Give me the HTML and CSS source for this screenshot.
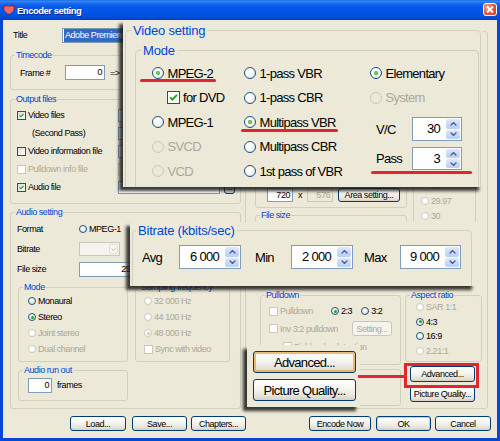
FILE: index.html
```html
<!DOCTYPE html>
<html lang="en">
<head>
  <meta charset="UTF-8">
  <title>Encoder setting</title>
  <link rel="stylesheet" href="styles.css">
</head>
<body>
  <div class="window">
    <div class="titlebar">
      <svg class="app-icon" viewBox="0 0 12 12">
        <path d="M6 11L1.2 6.2C-0.3 4.6 0.2 1.6 2.6 1.2C4 1 5.3 1.9 6 3C6.7 1.9 8 1 9.4 1.2C11.8 1.6 12.3 4.6 10.8 6.2Z" fill="#D9242B" stroke="#8A0F12" stroke-width="0.6"/>
        <path d="M3 2v6M5 2v8M7 2v8M9 2v6M1 4h10M1 6h10M3 8h6" stroke="#fff" stroke-width="0.5" opacity="0.75"/>
      </svg>
      <span class="title-text">Encoder setting</span>
      <span class="close-btn">
        <svg width="12" height="11" viewBox="0 0 12 11"><path d="M3 2.5l6 6M9 2.5l-6 6" stroke="#fff" stroke-width="1.8"/></svg>
      </span>
    </div>

    <div class="client">
      <div class="dialog-body">
        <!-- left column -->
        <div class="col-left">
          <div class="title-row">
            <span class="title-label">Title</span>
            <div class="textbox title-box"><span class="selected">Adobe Premiere Pro</span></div>
          </div>

          <div class="group timecode">
            <span class="group-title">Timecode</span>
            <div class="frame-row">
              <span class="frame-label">Frame #</span>
              <div class="textbox frame-box">0</div>
              <span class="arrow">=&gt;</span>
            </div>
          </div>

          <div class="group output">
            <span class="group-title">Output files</span>
            <div class="out-row">
              <span class="chk-line"><span class="chk"><svg viewBox="0 0 9 9"><path d="M1.8 4.3l1.8 1.8L7.2 2.4" fill="none" stroke="#21A121" stroke-width="1.5"/></svg></span>Video files</span>
              <div class="textbox path"></div><span class="btn dots">...</span>
            </div>
            <div class="out-row">
              <span class="chk-line indent">(Second Pass)</span>
              <div class="textbox path"></div><span class="btn dots">...</span>
            </div>
            <div class="out-row">
              <span class="chk-line"><span class="chk"></span>Video information file</span>
              <div class="textbox path"></div><span class="btn dots">...</span>
            </div>
            <div class="out-row">
              <span class="chk-line dis"><span class="chk off"></span>Pulldown info file</span>
              <div class="textbox path off"></div><span class="btn dots off">...</span>
            </div>
            <div class="out-row">
              <span class="chk-line"><span class="chk"><svg viewBox="0 0 9 9"><path d="M1.8 4.3l1.8 1.8L7.2 2.4" fill="none" stroke="#21A121" stroke-width="1.5"/></svg></span>Audio file</span>
              <div class="textbox path"></div><span class="btn dots">...</span>
            </div>
          </div>

          <div class="group audio">
            <span class="group-title">Audio setting</span>
            <div class="audio-row">
              <span>Format</span>
              <span class="rad-line"><span class="rad"></span>MPEG-1</span>
            </div>
            <div class="audio-row">
              <span>Bitrate</span>
              <span class="select"><span class="select-btn"><svg width="5" height="3" viewBox="0 0 5 3"><path d="M0.5 0.5l2 2 2-2" fill="none" stroke="#B8B5A8" stroke-width="1"/></svg></span></span>
            </div>
            <div class="audio-row">
              <span>File size</span>
              <div class="textbox size-box">25 000</div>
            </div>

            <div class="audio-sub">
              <div class="group mode-grp">
                <span class="group-title">Mode</span>
                <div class="rad-line"><span class="rad"></span>Monaural</div>
                <div class="rad-line"><span class="rad on"></span>Stereo</div>
                <div class="rad-line dis"><span class="rad off"></span>Joint stereo</div>
                <div class="rad-line dis"><span class="rad off"></span>Dual channel</div>
              </div>
              <div class="group freq-grp">
                <span class="group-title">Sampling frequency</span>
                <div class="rad-line dis"><span class="rad off"></span>32 000 Hz</div>
                <div class="rad-line dis"><span class="rad off"></span>44 100 Hz</div>
                <div class="rad-line dis"><span class="rad off on"></span>48 000 Hz</div>
                <div class="rad-line dis"><span class="chk off"></span>Sync with video</div>
              </div>
            </div>

            <div class="group runout">
              <span class="group-title">Audio run out</span>
              <div class="textbox runout-box">0</div>
              <span class="frames">frames</span>
            </div>
          </div>
        </div>

        <!-- right column (mostly covered by the callouts) -->
        <div class="group video-bg">
          <span class="group-title">Video setting</span>
          <div class="upper">
            <div class="main-col">
              <div class="group pic-grp">
                <span class="group-title">Picture size</span>
                <div class="pic-row">
                  <div class="textbox small-box">720</div>
                  <span class="times">x</span>
                  <div class="textbox small-box off">576</div>
                  <span class="btn area-btn">Area setting...</span>
                </div>
              </div>
              <div class="group filesize-grp">
                <span class="group-title">File size</span>
              </div>
            </div>
            <div class="group fps-grp">
              <span class="group-title">Frame rate</span>
              <div class="rad-line dis"><span class="rad off"></span>25</div>
              <div class="rad-line dis"><span class="rad off"></span>29.97</div>
              <div class="rad-line dis"><span class="rad off"></span>30</div>
            </div>
          </div>

          <div class="lower">
            <div class="lower-left">
              <div class="group pulldown-grp">
                <span class="group-title">Pulldown</span>
                <div class="pd-row one">
                  <span class="chk-line dis"><span class="chk off"></span>Pulldown</span>
                  <span class="rad-line"><span class="rad on"></span>2:3</span>
                  <span class="rad-line pd-gap"><span class="rad"></span>3:2</span>
                </div>
                <div class="pd-row two">
                  <span class="chk-line dis"><span class="chk off"></span>Inv 3:2 pulldown</span>
                  <span class="btn setting-btn off">Setting...</span>
                </div>
                <div class="pd-row three">
                  <span class="chk-line dis"><span class="chk off"></span>Field order detection</span>
                </div>
              </div>
              <div class="group misc-grp"></div>
            </div>
            <div class="lower-right">
              <div class="group aspect-grp">
                <span class="group-title">Aspect ratio</span>
                <div class="rad-line asp dis"><span class="rad off"></span>SAR 1:1</div>
                <div class="rad-line asp"><span class="rad on"></span>4:3</div>
                <div class="rad-line asp"><span class="rad"></span>16:9</div>
                <div class="rad-line asp dis"><span class="rad off"></span>2.21:1</div>
              </div>
              <span class="btn side-btn adv">Advanced...</span>
              <span class="btn side-btn pq">Picture Quality...</span>
            </div>
          </div>
        </div>
      </div>

      <div class="button-row">
        <span class="btn b-load">Load...</span>
        <span class="btn b-save">Save...</span>
        <span class="btn b-chap">Chapters...</span>
        <span class="btn b-enc">Encode Now</span>
        <span class="btn b-ok default">OK</span>
        <span class="btn b-cancel">Cancel</span>
      </div>
    </div>

    <!-- magnified callouts -->
    <div class="callout video-callout">
      <div class="big-group video-grp">
        <span class="big-title">Video setting</span>
        <div class="big-group mode-big">
          <span class="big-title">Mode</span>
          <div class="mode-cols">
            <div class="mcol c1">
              <div class="big-row"><span class="brad on"></span>MPEG-2</div>
              <div class="big-row dvd"><span class="bchk"><svg viewBox="0 0 11 11"><path d="M2.2 5.4l2.2 2.3L9 2.8" fill="none" stroke="#21A121" stroke-width="1.8"/></svg></span>for DVD</div>
              <div class="big-row"><span class="brad"></span>MPEG-1</div>
              <div class="big-row dis"><span class="brad off"></span>SVCD</div>
              <div class="big-row dis"><span class="brad off"></span>VCD</div>
            </div>
            <div class="mcol c2">
              <div class="big-row"><span class="brad"></span>1-pass VBR</div>
              <div class="big-row"><span class="brad"></span>1-pass CBR</div>
              <div class="big-row"><span class="brad on"></span>Multipass VBR</div>
              <div class="big-row"><span class="brad"></span>Multipass CBR</div>
              <div class="big-row"><span class="brad"></span>1st pass of VBR</div>
            </div>
            <div class="mcol c3">
              <div class="big-row"><span class="brad on"></span>Elementary</div>
              <div class="big-row dis"><span class="brad off"></span>System</div>
              <div class="spin-row vc">
                <span class="spin-label">V/C</span>
                <div class="spin"><span class="spin-val">30</span><span class="spin-btns"><span><svg width="7" height="4" viewBox="0 0 7 4"><path d="M0.6 3.4l2.9-2.8 2.9 2.8" fill="none" stroke="#4D6185" stroke-width="1.4"/></svg></span><span><svg width="7" height="4" viewBox="0 0 7 4"><path d="M0.6 0.6l2.9 2.8 2.9-2.8" fill="none" stroke="#4D6185" stroke-width="1.4"/></svg></span></span></div>
              </div>
              <div class="spin-row pass">
                <span class="spin-label">Pass</span>
                <div class="spin short"><span class="spin-val">3</span><span class="spin-btns"><span><svg width="7" height="4" viewBox="0 0 7 4"><path d="M0.6 3.4l2.9-2.8 2.9 2.8" fill="none" stroke="#4D6185" stroke-width="1.4"/></svg></span><span><svg width="7" height="4" viewBox="0 0 7 4"><path d="M0.6 0.6l2.9 2.8 2.9-2.8" fill="none" stroke="#4D6185" stroke-width="1.4"/></svg></span></span></div>
              </div>
            </div>
          </div>
        </div>
      </div>
      <span class="mark mark-mpeg2"></span>
      <span class="mark mark-multi"></span>
      <span class="mark mark-pass"></span>
    </div>

    <div class="callout rate-callout">
      <div class="big-group rate-grp">
        <span class="big-title">Bitrate (kbits/sec)</span>
        <div class="rate-row">
          <span class="rate-label">Avg</span>
          <div class="spin wide"><span class="spin-val">6 000</span><span class="spin-btns"><span><svg width="7" height="4" viewBox="0 0 7 4"><path d="M0.6 3.4l2.9-2.8 2.9 2.8" fill="none" stroke="#4D6185" stroke-width="1.4"/></svg></span><span><svg width="7" height="4" viewBox="0 0 7 4"><path d="M0.6 0.6l2.9 2.8 2.9-2.8" fill="none" stroke="#4D6185" stroke-width="1.4"/></svg></span></span></div>
          <span class="rate-label min">Min</span>
          <div class="spin wide"><span class="spin-val">2 000</span><span class="spin-btns"><span><svg width="7" height="4" viewBox="0 0 7 4"><path d="M0.6 3.4l2.9-2.8 2.9 2.8" fill="none" stroke="#4D6185" stroke-width="1.4"/></svg></span><span><svg width="7" height="4" viewBox="0 0 7 4"><path d="M0.6 0.6l2.9 2.8 2.9-2.8" fill="none" stroke="#4D6185" stroke-width="1.4"/></svg></span></span></div>
          <span class="rate-label max">Max</span>
          <div class="spin wide max-spin"><span class="spin-val">9 000</span><span class="spin-btns"><span><svg width="7" height="4" viewBox="0 0 7 4"><path d="M0.6 3.4l2.9-2.8 2.9 2.8" fill="none" stroke="#4D6185" stroke-width="1.4"/></svg></span><span><svg width="7" height="4" viewBox="0 0 7 4"><path d="M0.6 0.6l2.9 2.8 2.9-2.8" fill="none" stroke="#4D6185" stroke-width="1.4"/></svg></span></span></div>
        </div>
      </div>
    </div>

    <div class="callout adv-callout">
      <span class="big-btn hot">Advanced...</span>
      <span class="big-btn">Picture Quality...</span>
    </div>

    <span class="red-line"></span>
    <span class="red-box"></span>
  </div>
</body>
</html>
```

FILE: styles.css
```css
* {
  box-sizing: border-box;
}
body {
  margin: 0;
  font-family: "Liberation Sans", Arial, sans-serif;
  font-size: 9px;
  letter-spacing: -0.45px;
  color: #000;
}

/* window frame */
.window {
  position: relative;
  width: 500px;
  height: 441px;
  display: flex;
  flex-direction: column;
  background: #0846D4;
  overflow: hidden;
}
.titlebar {
  flex: none;
  height: 20px;
  display: flex;
  align-items: center;
  padding: 0 3px;
  color: #fff;
  background: linear-gradient(#0B5BE0 0, #3D8DF8 1px, #1A6CEF 3px, #0559E9 7px, #0354E3 13px, #004BD4 18px, #003FC0 20px);
}
.app-icon {
  width: 12px;
  height: 12px;
  margin-right: 2px;
}
.title-text {
  flex: 1;
  font-weight: bold;
  font-size: 9.5px;
  letter-spacing: -0.5px;
  text-shadow: 1px 1px 0 #0A2A94;
}
.close-btn {
  width: 14px;
  height: 13px;
  margin-top: -1px;
  display: flex;
  align-items: center;
  justify-content: center;
  border: 1px solid #fff;
  border-radius: 3px;
  background: radial-gradient(circle at 30% 30%, #F2A088, #E2573B 55%, #C23A1D);
}

.client {
  flex: 1;
  margin: 0 3px 3px;
  padding: 0 6px 0 7px;
  background: #ECE9D8;
}
.dialog-body {
  display: grid;
  grid-template-columns: 231px 243px;
  column-gap: 4px;
  height: 389px;
}

/* common controls */
.group {
  position: relative;
  border: 1px solid #D0D0BF;
  border-radius: 3px;
}
.group-title {
  position: absolute;
  top: -6px;
  left: 4px;
  padding: 0 1px;
  line-height: 10px;
  color: #0046D5;
  background: #ECE9D8;
  white-space: nowrap;
}
.textbox {
  height: 15px;
  line-height: 13px;
  padding: 0 2px;
  background: #fff;
  border: 1px solid #7F9DB9;
  white-space: nowrap;
  overflow: hidden;
}
.textbox.off {
  background: #ECE9D8;
  border-color: #C9C7BA;
  color: #ACA899;
}
.btn {
  display: flex;
  align-items: center;
  justify-content: center;
  height: 15px;
  border: 1px solid #003C74;
  border-radius: 3px;
  background: linear-gradient(#FFFFFF, #F5F4EF 45%, #E6E3D9 80%, #D6D0C5);
  white-space: nowrap;
}
.btn.off {
  border-color: #C9C7BA;
  color: #ACA899;
  background: #F4F3EE;
}
.btn.default {
  box-shadow: inset 0 0 0 1px #B9D1F8;
}
.dis {
  color: #ACA899;
}
.chk-line, .rad-line {
  display: flex;
  align-items: center;
  white-space: nowrap;
}
.chk {
  flex: none;
  width: 9px;
  height: 9px;
  margin-right: 2px;
  border: 1px solid #1C5180;
  background: linear-gradient(135deg, #DCDCD7, #fff);
  display: flex;
}
.chk svg {
  width: 7px;
  height: 7px;
}
.chk.off {
  border-color: #CAC8BB;
  background: #fff;
}
.rad {
  position: relative;
  flex: none;
  width: 8px;
  height: 8px;
  margin-right: 2px;
  border-radius: 50%;
  border: 1px solid #1C5180;
  background: radial-gradient(circle at 35% 35%, #fff, #DCDCD7);
}
.rad.on::after {
  content: "";
  position: absolute;
  inset: 1.5px;
  border-radius: 50%;
  background: #21A121;
}
.rad.off {
  border-color: #CAC8BB;
  background: #fff;
}
.rad.off.on::after {
  background: #CAC8BB;
}

/* left column */
.col-left {
  display: flex;
  flex-direction: column;
}
.title-row {
  display: flex;
  align-items: center;
  height: 14px;
  margin-top: 8px;
}
.title-label {
  width: 52px;
  padding-left: 3px;
}
.title-box {
  flex: 1;
  height: 15px;
  padding: 0 1px;
}
.selected {
  display: inline-block;
  padding: 0 1px;
  line-height: 13px;
  color: #fff;
  background: #316AC5;
}
.timecode {
  height: 35px;
  margin-top: 13px;
  padding: 9px 0 0 9px;
}
.frame-row {
  display: flex;
  align-items: center;
  height: 15px;
}
.frame-label {
  width: 45px;
}
.frame-box {
  width: 40px;
  text-align: right;
}
.arrow {
  margin-left: 5px;
}
.output {
  height: 105px;
  margin-top: 9px;
  padding: 6px 0 0 6px;
}
.out-row {
  display: grid;
  grid-template-columns: 101px 102px 15px;
  align-items: center;
  height: 18px;
}
.indent {
  padding-left: 15px;
}
.path {
  height: 13px;
}
.dots {
  justify-self: end;
  width: 11px;
  height: 13px;
}
.audio {
  height: 197px;
  margin-top: 8px;
  padding: 6px 0 0 6px;
}
.audio-row {
  display: grid;
  grid-template-columns: 62px auto;
  justify-content: start;
  align-items: center;
  height: 20px;
}
.select {
  display: flex;
  justify-content: flex-end;
  width: 41px;
  height: 14px;
  padding: 1px;
  border: 1px solid #C9C7BA;
  background: #F4F3EE;
}
.select-btn {
  width: 9px;
  display: flex;
  align-items: center;
  justify-content: center;
  border: 1px solid #E2E0D5;
  border-radius: 2px;
  background: #F8F7F2;
}
.size-box {
  width: 70px;
  text-align: right;
}
.audio-sub {
  display: flex;
  gap: 7px;
  margin: 8px 0 0 1px;
}
.mode-grp {
  width: 110px;
  height: 75px;
  padding: 5px 0 0 9px;
}
.freq-grp {
  width: 95px;
  height: 75px;
  padding: 5px 0 0 8px;
}
.mode-grp .rad-line, .freq-grp .rad-line {
  height: 16px;
}
.runout {
  display: flex;
  width: 110px;
  height: 31px;
  margin: 8px 0 0 1px;
  padding: 7px 0 0 9px;
  align-items: flex-start;
}
.runout-box {
  width: 24px;
  text-align: right;
}
.frames {
  margin-left: 5px;
  line-height: 15px;
}

/* right column */
.video-bg {
  height: 378px;
  margin-top: 11px;
  padding: 8px 5px 0 9px;
}
.upper {
  display: grid;
  grid-template-columns: 152px 63px;
  column-gap: 6px;
}
.pic-grp {
  height: 168px;
  display: flex;
  flex-direction: column;
  justify-content: flex-end;
  padding: 0 0 5px 11px;
}
.pic-row {
  display: flex;
  align-items: center;
  height: 14px;
}
.small-box {
  width: 26px;
  height: 14px;
  text-align: right;
}
.times {
  width: 14px;
  text-align: center;
}
.area-btn {
  width: 62px;
  height: 14px;
  margin-left: 5px;
}
.filesize-grp {
  height: 68px;
  margin-top: 7px;
}
.fps-grp {
  height: 190px;
  display: flex;
  flex-direction: column;
  justify-content: flex-end;
  padding: 0 0 6px 7px;
}
.fps-grp .rad-line {
  height: 15px;
}
.lower {
  display: grid;
  grid-template-columns: 141px 77px;
  column-gap: 4px;
  margin: 12px 0 0 5px;
}
.pulldown-grp {
  height: 70px;
  padding: 7px 0 0 8px;
}
.pd-row {
  display: flex;
  align-items: center;
}
.pd-row.one { height: 16px; }
.pd-row.two { height: 19px; }
.pd-row.three { height: 17px; padding-left: 14px; }
.pd-row.one .chk-line { width: 62px; }
.pd-row.two .chk-line { width: 83px; }
.pd-gap {
  margin-left: 9px;
}
.setting-btn {
  width: 40px;
}
.misc-grp {
  height: 37px;
  margin-top: 4px;
}
.aspect-grp {
  height: 67px;
  padding: 4px 0 0 10px;
}
.rad-line.asp {
  height: 14.5px;
}
.side-btn {
  width: 65px;
  height: 16px;
  margin-left: 5px;
  margin-top: 4px;
}

/* bottom buttons */
.button-row {
  display: flex;
  height: 15px;
  margin-top: 7px;
  padding-left: 60px;
}
.b-load { width: 56px; }
.b-save { width: 55px; margin-left: 6px; }
.b-chap { width: 55px; margin-left: 4px; }
.b-enc { width: 62px; margin-left: auto; }
.b-ok { width: 55px; margin-left: 5px; }
.b-cancel { width: 56px; margin-left: 4px; }

/* magnified callouts */
.callout {
  position: absolute;
  overflow: hidden;
  background: #ECE9D8;
  box-shadow: -4px 4px 3px rgba(25, 25, 25, 0.85);
  font-size: 13px;
  letter-spacing: -0.7px;
}
.big-group {
  position: relative;
  border: 1px solid #D0D0BF;
  border-radius: 4px;
}
.big-title {
  position: absolute;
  top: -8px;
  left: 5px;
  padding: 0 2px;
  line-height: 15px;
  letter-spacing: -0.2px;
  color: #0046D5;
  background: #ECE9D8;
  white-space: nowrap;
}
.big-row {
  display: flex;
  align-items: center;
  height: 24.5px;
  white-space: nowrap;
}
.brad {
  position: relative;
  flex: none;
  width: 12px;
  height: 12px;
  margin-right: 3.5px;
  border-radius: 50%;
  border: 1px solid #1C5180;
  background: radial-gradient(circle at 35% 35%, #fff 30%, #DCDCD7);
}
.brad.on::after {
  content: "";
  position: absolute;
  inset: 3px;
  border-radius: 50%;
  background: radial-gradient(circle, #8BE38B 0, #21A121 75%);
}
.brad.off {
  border-color: #CAC8BB;
  background: #ECE9D8;
}
.bchk {
  flex: none;
  width: 13px;
  height: 13px;
  margin-right: 3px;
  display: flex;
  border: 1px solid #1C5180;
  background: #fff;
}
.bchk svg {
  width: 11px;
  height: 11px;
}
.spin {
  display: flex;
  width: 50px;
  height: 24px;
  border: 1px solid #7F9DB9;
  background: #fff;
}
.spin.short {
  height: 23px;
}
.spin.wide {
  width: 62px;
}
.spin.max-spin {
  width: 61px;
}
.spin-val {
  flex: 1;
  text-align: right;
  padding-right: 6px;
  line-height: 21px;
}
.spin-btns {
  width: 15px;
  display: flex;
  flex-direction: column;
  gap: 1px;
  padding: 1px 1px 1px 0;
}
.spin-btns span {
  flex: 1;
  display: flex;
  align-items: center;
  justify-content: center;
  border-radius: 2px;
  background: linear-gradient(#DEE8FD, #B9CDF8);
}

.video-callout {
  left: 123px;
  top: 20px;
  width: 360px;
  height: 167px;
  padding: 10px 0 0 2px;
}
.video-grp {
  width: 356px;
  height: 220px;
  padding: 19px 0 0 9px;
}
.mode-big {
  width: 344px;
  height: 220px;
  padding: 10px 0 0 16px;
}
.mode-cols {
  display: flex;
}
.c1 { width: 92px; }
.c2 { width: 126px; }
.dvd {
  padding-left: 15px;
}
.spin-row {
  display: flex;
  align-items: center;
}
.spin-row.vc { margin-top: 7px; }
.spin-row.pass { margin-top: 6px; }
.spin-label {
  width: 42px;
  padding-left: 6px;
}
.mark {
  position: absolute;
  height: 3px;
  border-radius: 1.5px;
  background: #E3262E;
}
.mark-mpeg2 { left: 17px; top: 59px; width: 76px; }
.mark-multi { left: 118px; top: 109px; width: 97px; }
.mark-pass { left: 248px; top: 151px; width: 101px; }

.rate-callout {
  left: 130px;
  top: 222px;
  width: 346px;
  height: 64px;
  padding: 8px 0 0 2px;
}
.rate-grp {
  width: 340px;
  height: 100px;
  padding: 14px 0 0 9px;
}
.rate-grp .big-title {
  left: 3px;
}
.rate-row {
  display: flex;
  align-items: center;
  height: 24px;
}
.rate-label {
  width: 37px;
}
.rate-label.min {
  width: 36px;
  margin-left: 14px;
}
.rate-label.max {
  width: 36px;
  margin-left: 11px;
}

.adv-callout {
  left: 247px;
  top: 345px;
  width: 113px;
  height: 62px;
  padding: 6px 0 0 6px;
  display: flex;
  flex-direction: column;
  gap: 6px;
}
.big-btn {
  display: flex;
  align-items: center;
  justify-content: center;
  width: 103px;
  height: 22px;
  border: 1px solid #003C74;
  border-radius: 3px;
  background: linear-gradient(#FFFFFF, #F5F4EF 45%, #E6E3D9 80%, #D6D0C5);
}
.big-btn.hot {
  box-shadow: inset 0 0 0 2px rgba(232, 165, 70, 0.75);
}

.red-line {
  position: absolute;
  left: 358px;
  top: 375px;
  width: 47px;
  height: 3px;
  background: #E3262E;
}
.red-box {
  position: absolute;
  left: 404px;
  top: 363px;
  width: 75px;
  height: 25px;
  border: 3px solid #E3262E;
}
```
